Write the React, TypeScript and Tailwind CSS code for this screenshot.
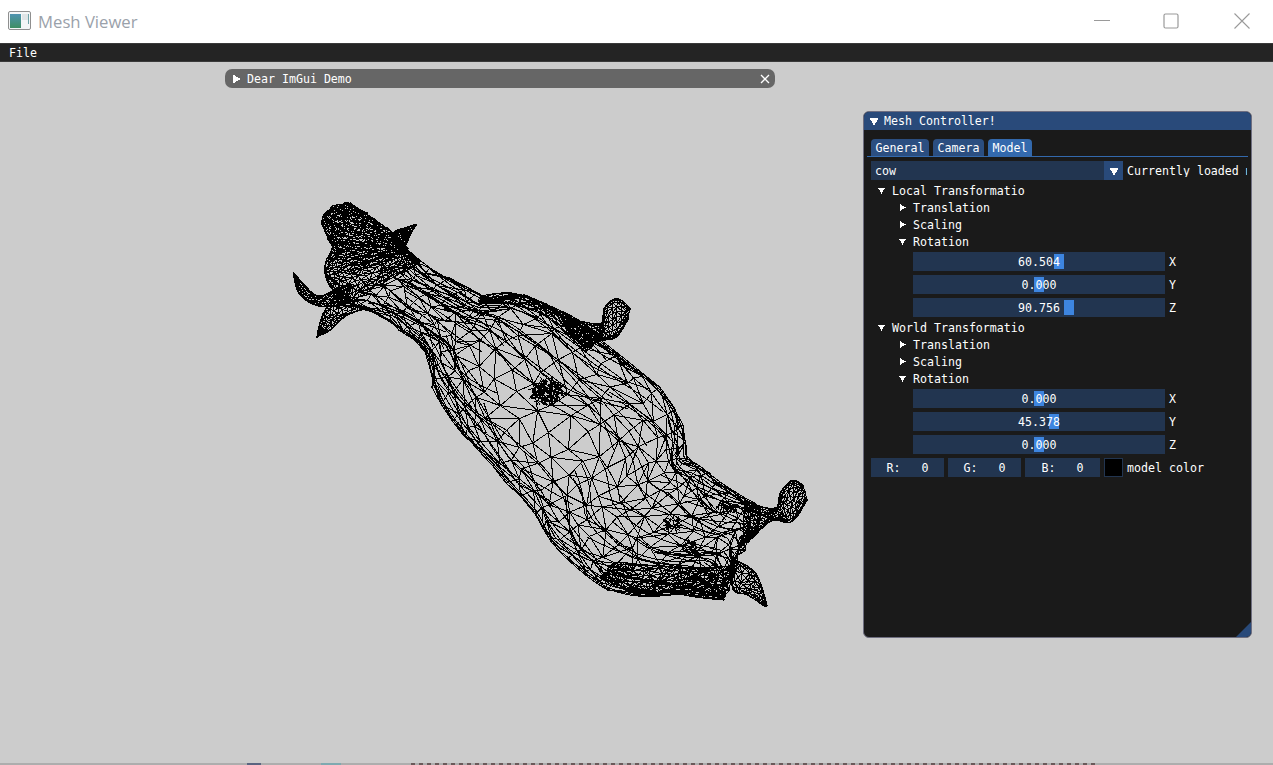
import React, { useMemo } from "react";

type P = [number, number];
type Section = [P, P];

const BODY: Section[] = [
  [[345, 305], [408, 250]],
  [[372, 312], [430, 268]],
  [[402, 330], [465, 288]],
  [[425, 352], [490, 298]],
  [[434, 385], [525, 295]],
  [[452, 418], [570, 318]],
  [[478, 450], [620, 355]],
  [[508, 482], [660, 390]],
  [[535, 512], [683, 425]],
  [[552, 543], [686, 455]],
  [[583, 573], [700, 466]],
  [[610, 590], [720, 482]],
  [[647, 597], [745, 498]],
  [[680, 594], [760, 508]],
  [[703, 598], [757, 532]],
  [[723, 600], [743, 535]],
];

const HEAD: Section[] = [
  [[333, 206], [350, 203]],
  [[322, 220], [365, 213]],
  [[328, 238], [392, 232]],
  [[332, 248], [406, 246]],
  [[325, 265], [408, 250]],
  [[328, 283], [408, 252]],
  [[345, 305], [420, 262]],
];

const EAR: Section[] = [
  [[392, 232], [417, 224]],
  [[392, 240], [412, 232]],
  [[400, 250], [406, 245]],
];

const HORN_LEFT: Section[] = [
  [[293, 273], [294, 273]],
  [[298, 292], [303, 283]],
  [[310, 303], [318, 296]],
  [[325, 307], [338, 288]],
  [[345, 305], [352, 285]],
];

const HORN_LOW: Section[] = [
  [[317, 338], [318, 336]],
  [[320, 322], [331, 330]],
  [[326, 308], [346, 316]],
  [[340, 290], [368, 308]],
];

const FRONT_FOOT: Section[] = [
  [[567, 330], [560, 316]],
  [[585, 348], [585, 322]],
  [[597, 342], [602, 323]],
  [[606, 340], [604, 308]],
  [[617, 337], [617, 298]],
  [[628, 320], [630, 308]],
];

const BACK_FOOT: Section[] = [
  [[743, 533], [745, 500]],
  [[757, 532], [763, 507]],
  [[773, 520], [777, 507]],
  [[788, 523], [780, 493]],
  [[797, 517], [792, 480]],
  [[807, 500], [803, 485]],
];

const REAR_LEG: Section[] = [
  [[730, 562], [732, 558]],
  [[733, 590], [753, 570]],
  [[747, 595], [762, 587]],
  [[766, 607], [767, 606]],
];

const FLANK: Section[] = [
  [[600, 578], [615, 562]],
  [[640, 592], [660, 566]],
  [[680, 592], [700, 568]],
  [[725, 598], [738, 565]],
];

// the dark fold that runs under the back, down to the front leg
const BACK_FOLD: Section[] = [
  [[478, 302], [480, 296]],
  [[510, 304], [512, 293]],
  [[545, 316], [548, 305]],
  [[570, 338], [582, 322]],
  [[586, 352], [600, 338]],
];

function lerp(a: P, b: P, t: number): P {
  return [a[0] + (b[0] - a[0]) * t, a[1] + (b[1] - a[1]) * t];
}

// catmull-rom so the outline comes out round and not faceted
function spline(a: P, b: P, c: P, d: P, t: number): P {
  const f = (p0: number, p1: number, p2: number, p3: number) =>
    0.5 * (2 * p1 + (p2 - p0) * t + (2 * p0 - 5 * p1 + 4 * p2 - p3) * t * t + (3 * p1 - p0 - 3 * p2 + p3) * t * t * t);
  return [f(a[0], b[0], c[0], d[0]), f(a[1], b[1], c[1], d[1])];
}

function sectionAt(sections: Section[], f: number): Section {
  const k = Math.min(Math.floor(f), sections.length - 2);
  const t = f - k;
  const get = (i: number) => sections[Math.max(0, Math.min(sections.length - 1, i))];
  return [
    spline(get(k - 1)[0], get(k)[0], get(k + 1)[0], get(k + 2)[0], t),
    spline(get(k - 1)[1], get(k)[1], get(k + 1)[1], get(k + 2)[1], t),
  ];
}

// seeded so the mesh comes out the same on every render
function makeRand(seed: number) {
  let s = seed;
  return () => {
    s = (s * 16807) % 2147483647;
    return (s - 1) / 2147483646;
  };
}

const fmt = (p: P) => `${p[0].toFixed(1)} ${p[1].toFixed(1)}`;

function meshPath(sections: Section[], nu: number, nv: number, jitter: number, seed: number) {
  const rand = makeRand(seed);
  const grid: P[][] = [];
  const rows = (sections.length - 1) * nu;
  for (let i = 0; i <= rows; i++) {
    const [left, right] = sectionAt(sections, i / nu);
    const row: P[] = [];
    for (let j = 0; j <= nv; j++) {
      // bunch the rows toward the edge, like a round body seen from the side
      const v = (1 - Math.cos((Math.PI * j) / nv)) / 2;
      const edge = j === 0 || j === nv;
      const p = lerp(left, right, v);
      const d = edge ? 0 : jitter;
      row.push([p[0] + (rand() - 0.5) * d, p[1] + (rand() - 0.5) * d]);
    }
    grid.push(row);
  }
  let d = "";
  for (let i = 0; i <= rows; i++) {
    for (let j = 0; j <= nv; j++) {
      const p = grid[i][j];
      if (j < nv) d += `M${fmt(p)}L${fmt(grid[i][j + 1])}`;
      if (i < rows) d += `M${fmt(p)}L${fmt(grid[i + 1][j])}`;
      if (i < rows && j < nv) {
        d += rand() > 0.5 ? `M${fmt(p)}L${fmt(grid[i + 1][j + 1])}` : `M${fmt(grid[i][j + 1])}L${fmt(grid[i + 1][j])}`;
      }
    }
  }
  return d;
}

// long lines that follow the body, packed toward both edges
function streaks(sections: Section[], count: number, seed: number) {
  const rand = makeRand(seed);
  const max = sections.length - 1;
  let d = "";
  for (let n = 0; n < count; n++) {
    const from = rand() * (max - 2);
    const len = 2 + rand() * 4;
    const side = rand() > 0.5;
    const off = Math.pow(rand(), 1.6) * 0.5;
    const v0 = side ? off : 1 - off;
    const drift = (rand() - 0.5) * 0.3;
    const steps = Math.ceil(len * 3);
    for (let s = 0; s <= steps; s++) {
      const tt = s / steps;
      const f = Math.min(max - 0.001, from + len * tt);
      const [l, r] = sectionAt(sections, f);
      const v = Math.max(0.01, Math.min(0.99, v0 + drift * Math.sin(tt * Math.PI)));
      d += `${s === 0 ? "M" : "L"}${fmt(lerp(l, r, v))}`;
    }
  }
  return d;
}

// small dense spot of short lines, the folds of the hide
function clump(cx: number, cy: number, rx: number, ry: number, count: number, seed: number, len = 5) {
  const rand = makeRand(seed);
  let d = "";
  for (let i = 0; i < count; i++) {
    const a = rand() * Math.PI * 2;
    const r = Math.sqrt(rand());
    const x = cx + Math.cos(a) * r * rx;
    const y = cy + Math.sin(a) * r * ry;
    const b = rand() * Math.PI * 2;
    d += `M${x.toFixed(1)} ${y.toFixed(1)}L${(x + Math.cos(b) * len).toFixed(1)} ${(y + Math.sin(b) * len).toFixed(1)}`;
  }
  return d;
}

function CowMesh() {
  const paths = useMemo(
    () => [
      meshPath(BODY, 2, 14, 9, 11),
      streaks(BODY, 100, 17),
      meshPath(HEAD, 6, 20, 2.5, 23),
      meshPath(EAR, 5, 7, 1, 37),
      meshPath(HORN_LEFT, 4, 7, 1, 41),
      meshPath(HORN_LOW, 4, 7, 1, 53),
      meshPath(FRONT_FOOT, 3, 10, 1, 67),
      meshPath(BACK_FOOT, 3, 10, 1, 71),
      meshPath(REAR_LEG, 4, 7, 1, 83),
      meshPath(FLANK, 7, 9, 3, 97),
      meshPath(BACK_FOLD, 4, 5, 1.5, 131),
      clump(547, 392, 15, 12, 190, 101),
      clump(672, 524, 7, 5, 35, 103),
      clump(690, 548, 8, 6, 40, 107),
      clump(725, 508, 8, 5, 35, 109),
      clump(350, 222, 20, 14, 120, 127, 4),
      clump(380, 238, 18, 6, 40, 137, 4),
    ],
    []
  );
  return (
    <svg className="absolute left-0 top-0" width={1273} height={765} viewBox="0 0 1273 765" fill="none">
      {paths.map((d, i) => (
        <path key={i} d={d} stroke="#000000" strokeWidth={1} shapeRendering="crispEdges" />
      ))}
    </svg>
  );
}

function Arrow({ open, size = 9 }: { open: boolean; size?: number }) {
  return (
    <svg width={size} height={size} viewBox="0 0 10 10" className="shrink-0" shapeRendering="crispEdges">
      <path d={open ? "M0 1.5H10L5 9.5Z" : "M1.5 0V10L9.5 5Z"} fill="#ffffff" />
    </svg>
  );
}

function Slider({ value, axis }: { value: number; axis: string }) {
  const left = 2 + ((value + 360) / 720) * 238;
  return (
    <div className="flex h-[19px] items-center">
      <div className="relative flex h-[19px] w-[252px] items-center justify-center bg-[#223550]">
        <div className="absolute top-[2px] h-[15px] w-[10px] bg-[#3d85e0]" style={{ left }} />
        <span className="relative">{value.toFixed(3)}</span>
      </div>
      <span className="ml-1">{axis}</span>
    </div>
  );
}

function TreeRow({ open, label, deep }: { open: boolean; label: string; deep?: boolean }) {
  return (
    <div className={`flex h-[17px] items-center ${deep ? "pl-[28px]" : "pl-[7px]"}`}>
      <div className="flex w-[14px] items-center">
        <Arrow open={open} size={7} />
      </div>
      <span>{label}</span>
    </div>
  );
}

function TransformGroup({ label, values }: { label: string; values: number[] }) {
  return (
    <div className="flex flex-col">
      <TreeRow open label={label} />
      <TreeRow open={false} label="Translation" deep />
      <TreeRow open={false} label="Scaling" deep />
      <TreeRow open label="Rotation" deep />
      <div className="mt-[2px] flex flex-col gap-1 pl-[42px]">
        {values.map((v, i) => (
          <Slider key={i} value={v} axis={["X", "Y", "Z"][i]} />
        ))}
      </div>
    </div>
  );
}

function ColorField({ label, width }: { label: string; width: string }) {
  return (
    <div className={`flex h-[19px] items-center justify-center gap-[21px] bg-[#223550] ${width}`}>
      <span>{label}:</span>
      <span>0</span>
    </div>
  );
}

function MeshController() {
  return (
    <div className="absolute left-[863px] top-[111px] flex h-[527px] w-[389px] flex-col overflow-hidden rounded-[6px] border border-[#6e6e80] bg-[#1a1a1a] text-[11.62px] leading-none text-white [font-family:'DejaVu_Sans_Mono',monospace] [&_span]:pt-[2px]">
      <div className="flex h-[18px] shrink-0 items-center gap-[5px] bg-[#294a7a] pl-[5px]">
        <Arrow open size={10} />
        <span>Mesh Controller!</span>
      </div>
      <div className="mx-[3px] flex h-[27px] shrink-0 items-end gap-1 border-b border-[#3369ad] pl-[4px]">
        <div className="flex h-[17px] w-[58px] items-center justify-center rounded-t-[4px] bg-[#2b4e80]"><span>General</span></div>
        <div className="flex h-[17px] w-[51px] items-center justify-center rounded-t-[4px] bg-[#2b4e80]"><span>Camera</span></div>
        <div className="flex h-[17px] w-[44px] items-center justify-center rounded-t-[4px] bg-[#3369ad]"><span>Model</span></div>
      </div>
      <div className="mt-1 flex h-[19px] shrink-0 items-center overflow-hidden pl-[7px]">
        <div className="flex h-[19px] w-[233px] shrink-0 items-center bg-[#223550] pl-1"><span>cow</span></div>
        <div className="flex h-[19px] w-[19px] shrink-0 items-center justify-center bg-[#294a7a]">
          <Arrow open size={10} />
        </div>
        <span className="ml-1 w-[120px] shrink-0 overflow-hidden whitespace-nowrap">Currently loaded mesh</span>
      </div>
      <div className="mt-[2px] flex flex-col gap-[2px] pl-[7px]">
        <TransformGroup label="Local Transformatio" values={[60.504, 0, 90.756]} />
        <TransformGroup label="World Transformatio" values={[0, 45.378, 0]} />
      </div>
      <div className="mt-1 flex items-center gap-1 pl-[7px]">
        <ColorField label="R" width="w-[73px]" />
        <ColorField label="G" width="w-[73px]" />
        <ColorField label="B" width="w-[75px]" />
        <div className="h-[19px] w-[19px] border border-[#223550] bg-black" />
        <span>model color</span>
      </div>
      <div className="absolute bottom-0 right-0 h-[15px] w-[15px] bg-[#294a7a] [clip-path:polygon(100%_0,100%_100%,0_100%)]" />
    </div>
  );
}

function DemoWindow() {
  return (
    <div className="absolute left-[225px] top-[69px] flex h-[19px] w-[550px] items-center justify-between rounded-[7px] bg-[#666666] pl-[6px] pr-[5px] text-[11.62px] leading-none text-white [font-family:'DejaVu_Sans_Mono',monospace]">
      <div className="flex items-center gap-[6px]">
        <Arrow open={false} size={10} />
        <span className="pt-[2px]">Dear ImGui Demo</span>
      </div>
      <svg width={10} height={10} viewBox="0 0 10 10">
        <path d="M1 1L9 9M9 1L1 9" stroke="#ffffff" strokeWidth={1.3} />
      </svg>
    </div>
  );
}

function TitleBar() {
  return (
    <div className="flex h-[43px] shrink-0 items-center bg-white pl-2">
      <svg width={23} height={19} viewBox="0 0 23 19" className="mb-[3px]">
        <defs>
          <linearGradient id="appIcon" x1="0" y1="0" x2="0" y2="1">
            <stop offset="0" stopColor="#4f93b0" />
            <stop offset="1" stopColor="#3f8f63" />
          </linearGradient>
        </defs>
        <rect x={0.5} y={0.5} width={22} height={18} rx={1.5} fill="#f4f6f7" stroke="#8f8f8f" />
        <rect x={2} y={3} width={11} height={14} fill="url(#appIcon)" />
        <rect x={14} y={3} width={6} height={6} fill="#dfe4e6" />
        <rect x={20} y={3} width={1} height={10} fill="#6fa3a8" />
      </svg>
      <span className="ml-[7px] text-[16.7px] text-[#9aa1aa] [font-family:'Open_Sans',sans-serif]">Mesh Viewer</span>
      <div className="ml-auto mb-[2px] flex items-center">
        <svg width={16} height={16} viewBox="0 0 16 16" className="mr-[53px]">
          <path d="M0 7.5H16" stroke="#9a9a9a" />
        </svg>
        <svg width={16} height={16} viewBox="0 0 16 16" className="mr-[55px]">
          <rect x={1} y={1} width={14} height={14} rx={1.5} fill="none" stroke="#9a9a9a" strokeWidth={1.2} />
        </svg>
        <svg width={16} height={16} viewBox="0 0 16 16" className="mr-[23px]">
          <path d="M0.5 0.5L15.5 15.5M15.5 0.5L0.5 15.5" stroke="#9a9a9a" strokeWidth={1.1} />
        </svg>
      </div>
    </div>
  );
}

export default function App() {
  return (
    <div className="relative flex h-[765px] w-[1273px] flex-col overflow-hidden bg-[#cccccc]">
      <TitleBar />
      <div className="flex h-[19px] shrink-0 items-center border-y border-[#3a3a3a] bg-[#242424] pl-[9px] text-[11.62px] leading-none text-white [font-family:'DejaVu_Sans_Mono',monospace]">
        <span className="pt-[2px]">File</span>
      </div>
      <div className="flex-1" />
      <div className="flex h-[2px] shrink-0 bg-[#adadad]">
        <div className="ml-[247px] h-full w-[14px] bg-[#5a6480]" />
        <div className="ml-[60px] h-full w-[20px] bg-[#7fa9b0]" />
        <div className="ml-[70px] h-full w-[684px] bg-[repeating-linear-gradient(90deg,#6a5a5a_0,#6a5a5a_4px,transparent_4px,transparent_8px)]" />
      </div>
      <CowMesh />
      <DemoWindow />
      <MeshController />
    </div>
  );
}
